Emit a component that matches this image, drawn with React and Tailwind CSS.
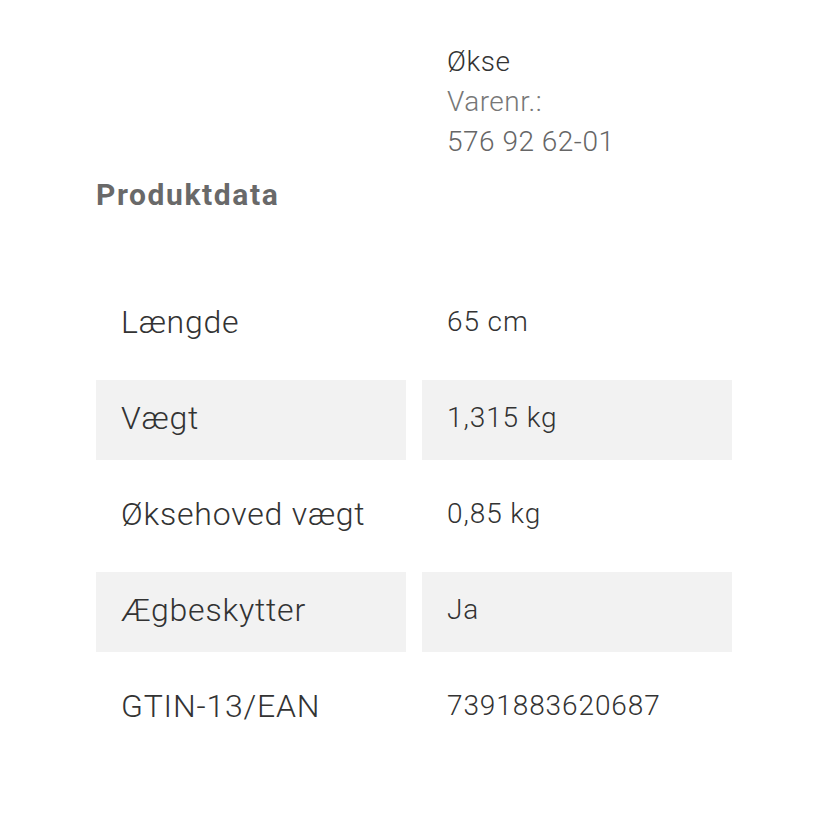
const ROWS = [
  { label: 'Længde', value: '65 cm' },
  { label: 'Vægt', value: '1,315 kg' },
  { label: 'Øksehoved vægt', value: '0,85 kg' },
  { label: 'Ægbeskytter', value: 'Ja' },
  { label: 'GTIN-13/EAN', value: '7391883620687' },
]

export default function App() {
  return (
    <div className="min-h-[815px] bg-white pl-[96px] pr-[95px] pt-[42px]" style={{ fontFamily: 'Roboto, "Noto Sans", sans-serif' }}>
      {/* Product info */}
      <div className="grid grid-cols-[310px_310px] gap-x-4">
        <div />
        <div className="pl-[25px] text-[28px] font-light leading-[40px] tracking-[0.5px]">
          <div className="text-[#333333]">Økse</div>
          <div className="text-[#777777]">Varenr.:</div>
          <div className="text-[#666666]">576 92 62-01</div>
        </div>
      </div>

      <h2 className="mt-[17px] text-[30px] leading-[32px] font-bold tracking-[1.6px] text-[#696969]">Produktdata</h2>

      {/* Spec table */}
      <div className="mt-[65px] flex flex-col">
        {ROWS.map((row, i) => (
          <div key={row.label} className="grid grid-cols-[310px_310px] gap-x-4 py-2">
            <div className={`flex h-[80px] items-center pb-[4px] pl-[25px] text-[32px] font-light tracking-[0.8px] text-[#333333] ${i % 2 === 1 ? 'bg-[#f2f2f2]' : ''}`}>
              {row.label}
            </div>
            <div className={`flex h-[80px] items-center pb-[4px] pl-[25px] text-[28px] font-light tracking-[0.9px] text-[#333333] ${i % 2 === 1 ? 'bg-[#f2f2f2]' : ''}`}>
              {row.value}
            </div>
          </div>
        ))}
      </div>
    </div>
  )
}
